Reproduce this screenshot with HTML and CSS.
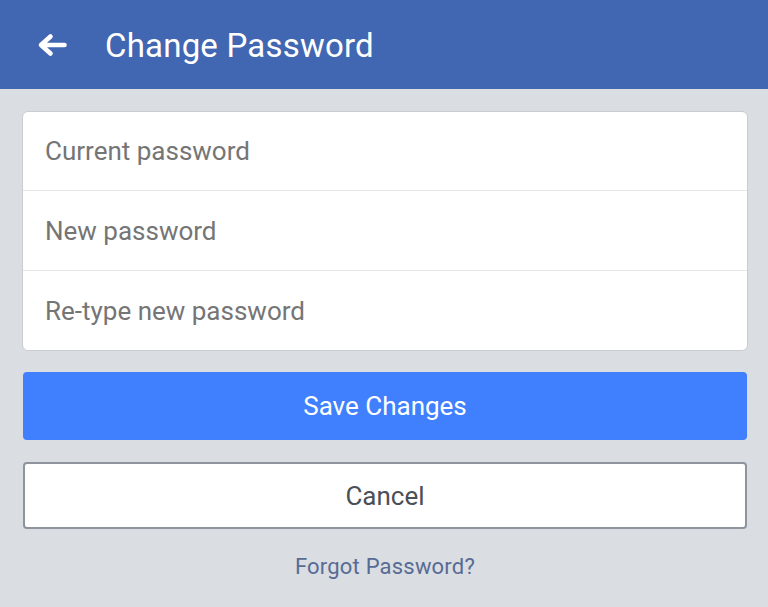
FILE: index.html
```html
<!DOCTYPE html>
<html>
<head>
<meta charset="utf-8">
<link rel="stylesheet" href="styles.css">
</head>
<body>
<header class="topbar">
  <svg class="back" width="30" height="24" viewBox="0 0 30 24">
    <path d="M27.5 12H5M13.5 3.5L4 12L13.5 20.5" fill="none" stroke="#fff" stroke-width="4.6" stroke-linecap="round" stroke-linejoin="round"/>
  </svg>
  <h1 class="title">Change Password</h1>
</header>
<main class="content">
  <div class="card">
    <div class="field">Current password</div>
    <div class="field">New password</div>
    <div class="field">Re-type new password</div>
  </div>
  <button class="btn btn-primary">Save Changes</button>
  <button class="btn btn-secondary">Cancel</button>
  <a class="forgot">Forgot Password?</a>
</main>
</body>
</html>
```
FILE: styles.css
```css
html, body {
  margin: 0;
  padding: 0;
}
body {
  background: #dadde1;
  font-family: Roboto, "Noto Sans", sans-serif;
  width: 768px;
  height: 607px;
  overflow: hidden;
}
.topbar {
  height: 89px;
  background: #4267b2;
  display: flex;
  align-items: center;
  padding-left: 37px;
  box-sizing: border-box;
}
.back {
  display: block;
  margin-right: 38px;
}
.title {
  margin: 0;
  color: #fff;
  font-weight: 400;
  font-size: 33px;
  letter-spacing: 0.2px;
  padding-top: 2px;
}
.content {
  padding: 22px 20px 0 22px;
  display: flex;
  flex-direction: column;
  align-items: stretch;
}
.card {
  background: #fff;
  border: 1px solid #c9ccd1;
  border-radius: 6px;
  overflow: hidden;
}
.field {
  height: 79px;
  display: flex;
  align-items: center;
  padding-left: 22px;
  font-size: 26px;
  color: #757575;
  border-top: 1px solid #e4e6e9;
}
.field:first-child {
  border-top: none;
  height: 78px;
}
.btn {
  font-family: Roboto, "Noto Sans", sans-serif;
  font-size: 26px;
  display: block;
  margin-left: 1px;
  margin-right: 1px;
  box-sizing: border-box;
  cursor: pointer;
}
.btn-primary {
  margin-top: 21px;
  height: 68px;
  background: #4080ff;
  color: #fff;
  border: none;
  border-radius: 4px;
}
.btn-secondary {
  margin-top: 22px;
  height: 67px;
  background: #fff;
  color: #4b4f56;
  border: 2px solid #8d949e;
  border-radius: 4px;
}
.forgot {
  margin-top: 25px;
  text-align: center;
  font-size: 22px;
  color: #576b95;
  letter-spacing: 0.2px;
}
```
